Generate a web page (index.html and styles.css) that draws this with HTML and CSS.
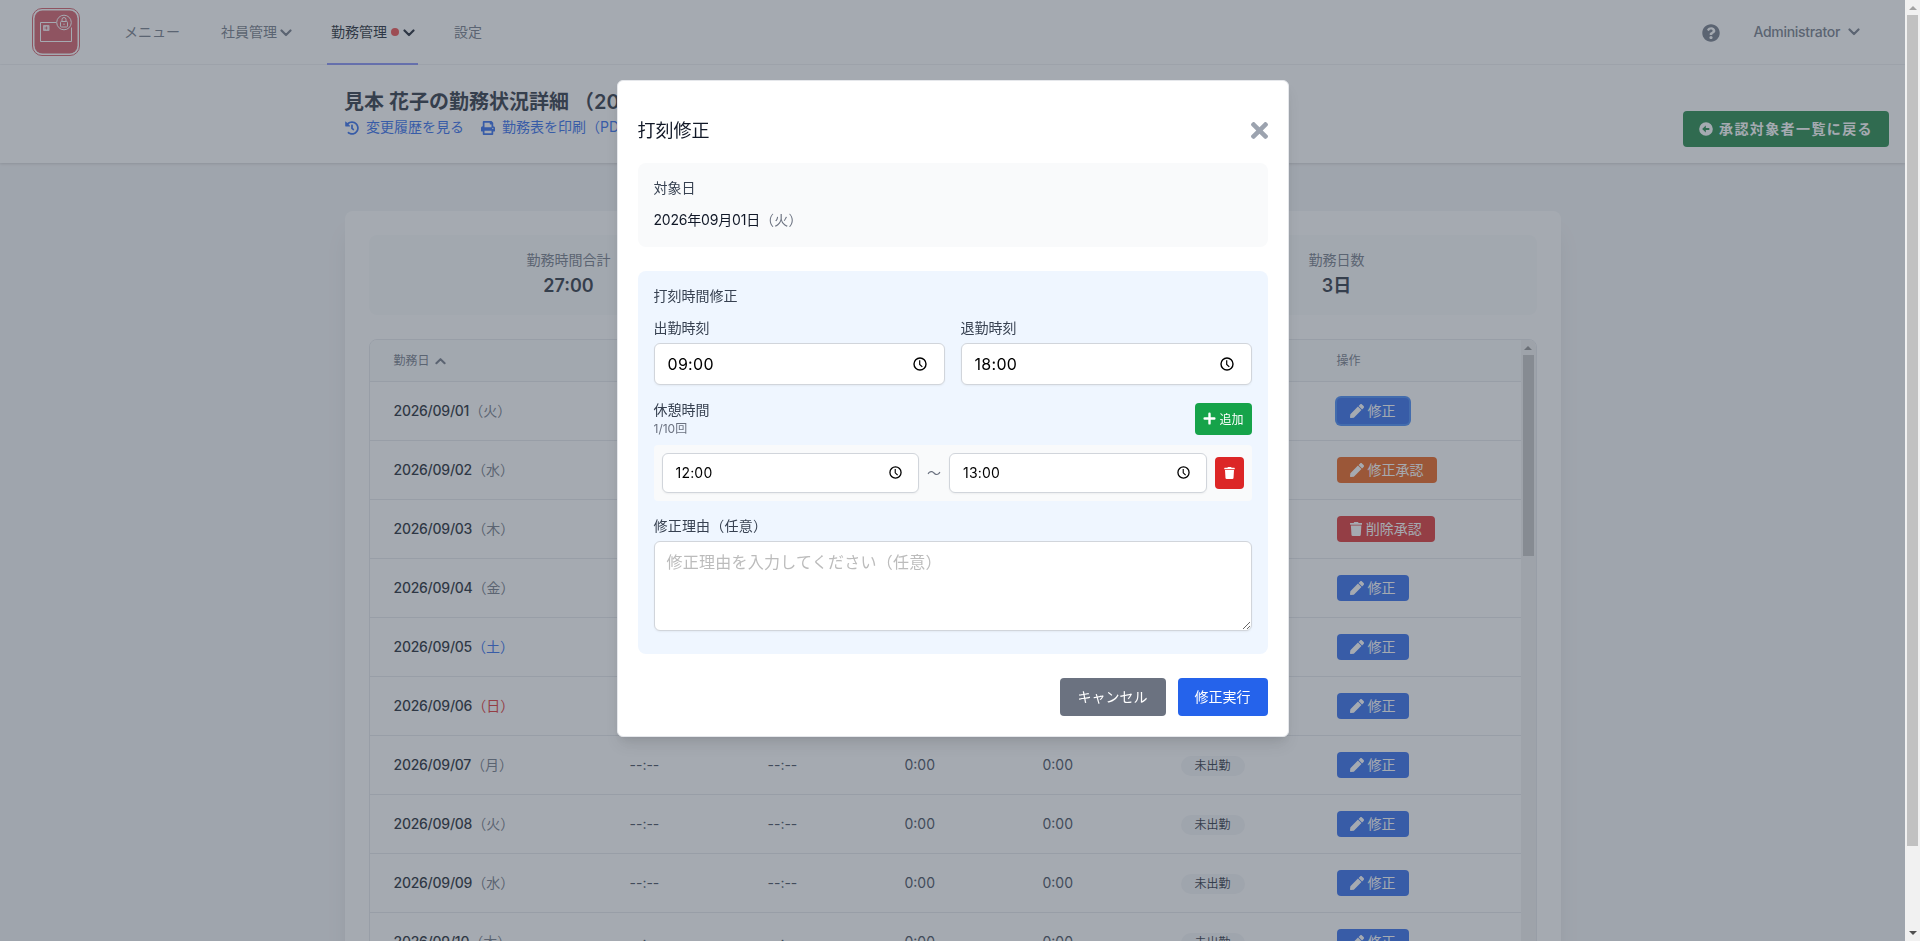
FILE: index.html
```html
<!DOCTYPE html>
<html lang="ja">
<head>
  <meta charset="UTF-8">
  <title>勤務状況詳細</title>
  <link rel="stylesheet" href="styles.css">
</head>
<body>

  <!-- Icons -->
  <svg class="sprite">
    <symbol id="chevron" viewBox="0 0 12 8"><path d="M1.5 1.5L6 6l4.5-4.5" fill="none" stroke="currentColor" stroke-width="2.2" stroke-linecap="round" stroke-linejoin="round"/></symbol>
    <symbol id="question" viewBox="0 0 512 512"><path d="M504 256c0 136.997-111.043 248-248 248S8 392.997 8 256C8 119.083 119.043 8 256 8s248 111.083 248 248zM262.655 90c-54.497 0-89.255 22.957-116.549 63.758-3.536 5.286-2.353 12.415 2.715 16.258l34.699 26.31c5.205 3.947 12.621 3.008 16.665-2.122 17.864-22.658 30.113-35.797 57.303-35.797 20.429 0 45.698 13.148 45.698 32.958 0 14.976-12.363 22.667-32.534 33.976C247.128 238.528 216 254.941 216 296v4c0 6.627 5.373 12 12 12h56c6.627 0 12-5.373 12-12v-1.333c0-28.462 83.186-29.647 83.186-106.667 0-58.002-60.165-102-116.531-102zM256 338c-25.365 0-46 20.635-46 46 0 25.364 20.635 46 46 46s46-20.636 46-46c0-25.365-20.635-46-46-46z"/></symbol>
    <symbol id="history" viewBox="0 0 512 512"><path d="M504 255.531c.253 136.64-111.18 248.372-247.82 248.468-59.015.042-113.223-20.53-155.822-54.911-11.077-8.94-11.905-25.541-1.839-35.607l11.267-11.267c8.609-8.609 22.353-9.551 31.891-1.984C173.062 425.135 212.781 440 256 440c101.705 0 184-82.311 184-184 0-101.705-82.311-184-184-184-48.814 0-93.149 18.969-126.068 49.932l50.754 50.754c10.08 10.08 2.941 27.314-11.313 27.314H24c-8.837 0-16-7.163-16-16V38.627c0-14.254 17.234-21.393 27.314-11.314l49.372 49.372C129.209 34.136 189.552 8 256 8c136.81 0 247.747 110.78 248 247.531zm-180.912 78.784l9.823-12.63c8.138-10.463 6.253-25.542-4.21-33.679L288 256.349V152c0-13.255-10.745-24-24-24h-16c-13.255 0-24 10.745-24 24v135.651l65.409 50.874c10.463 8.137 25.541 6.253 33.679-4.21z"/></symbol>
    <symbol id="print" viewBox="0 0 512 512"><path d="M448 192V77.25c0-8.49-3.37-16.62-9.37-22.63L393.37 9.37c-6-6-14.14-9.37-22.63-9.37H96C78.33 0 64 14.33 64 32v160c-35.35 0-64 28.65-64 64v112c0 8.84 7.16 16 16 16h48v96c0 17.67 14.33 32 32 32h320c17.67 0 32-14.33 32-32v-96h48c8.84 0 16-7.16 16-16V256c0-35.35-28.65-64-64-64zm-64 256H128v-96h256v96zm0-224H128V64h192v48c0 8.84 7.16 16 16 16h48v96zm48 72c-13.25 0-24-10.75-24-24 0-13.26 10.75-24 24-24s24 10.74 24 24c0 13.25-10.75 24-24 24z"/></symbol>
    <symbol id="back" viewBox="0 0 16 16"><path fill-rule="evenodd" d="M8 .2a7.8 7.8 0 1 0 0 15.6A7.8 7.8 0 0 0 8 .2zM3.600 8l4.200-4v2.800h4v2.400h-4V12z"/></symbol>
    <symbol id="pen" viewBox="0 0 512 512"><path d="M290.74 93.24l128.02 128.02-277.99 277.99-114.14 12.6C11.35 513.54-1.56 500.62.14 485.34l12.7-114.22 277.9-277.88zm207.2-19.06l-60.11-60.11c-18.75-18.75-49.16-18.75-67.91 0l-56.55 56.55 128.02 128.02 56.55-56.55c18.75-18.76 18.75-49.16 0-67.91z"/></symbol>
    <symbol id="trash" viewBox="0 0 448 512"><path d="M432 32H312l-9.4-18.7A24 24 0 0 0 281.1 0H166.8a23.72 23.72 0 0 0-21.4 13.3L136 32H16A16 16 0 0 0 0 48v32a16 16 0 0 0 16 16h416a16 16 0 0 0 16-16V48a16 16 0 0 0-16-16zM53.2 467a48 48 0 0 0 47.9 45h245.8a48 48 0 0 0 47.9-45L416 128H32z"/></symbol>
    <symbol id="plus" viewBox="0 0 12 12"><path d="M6 1.500v9M1.500 6h9" stroke="currentColor" stroke-width="2.200" stroke-linecap="round"/></symbol>
    <symbol id="times" viewBox="0 80 352 352"><path d="M242.72 256l100.07-100.07c12.28-12.28 12.28-32.19 0-44.48l-22.24-22.24c-12.28-12.28-32.19-12.28-44.48 0L176 189.28 75.93 89.21c-12.28-12.28-32.19-12.28-44.48 0L9.21 111.45c-12.28 12.28-12.28 32.19 0 44.48L109.28 256 9.21 356.07c-12.28 12.28-12.28 32.19 0 44.48l22.24 22.24c12.28 12.28 32.2 12.28 44.48 0L176 322.72l100.07 100.07c12.28 12.28 32.2 12.28 44.48 0l22.24-22.24c12.28-12.28 12.28-32.19 0-44.48L242.72 256z"/></symbol>
    <symbol id="clock" viewBox="0 0 14 14"><g fill="none" stroke="#000" stroke-width="1.400"><circle cx="7" cy="7" r="6"/><path d="M6.700 3.200V7.400l2.600 2.500" stroke-width="1.200"/></g></symbol>
  </svg>

  <div class="page">
    <nav class="navbar">
      <svg class="logo" viewBox="0 0 48 48">
        <rect x=".5" y=".5" width="47" height="47" rx="9.500" fill="#fff" stroke="#d2525f"/>
        <rect x="2.500" y="2.500" width="43" height="43" rx="8" fill="#d2525f"/>
        <g fill="none" stroke="#fff">
          <path d="M24.500 14.500h-16v19h31v-14"/>
          <circle cx="32" cy="14.500" r="7.300" fill="#d2525f"/>
          <rect x="28.500" y="13.500" width="7" height="5.500" rx="1"/>
          <path d="M30 13.500v-2a2 2 0 0 1 4 0v2M32 15.500v1.500"/>
        </g>
        <rect x="11" y="17" width="6.500" height="6" rx="1" fill="#fff" opacity=".85"/>
        <path d="M12.500 20h3M14.500 18.500v3" stroke="#d2525f" stroke-width=".8"/>
      </svg>
      <div class="nav-links">
        <a class="nav-link">メニュー</a>
        <a class="nav-link">社員管理<svg class="chevron"><use href="#chevron"/></svg></a>
        <a class="nav-link active">勤務管理<span class="dot"></span><svg class="chevron"><use href="#chevron"/></svg></a>
        <a class="nav-link">設定</a>
      </div>
      <div class="nav-user">
        <svg class="help"><use href="#question"/></svg>
        <span class="user-name">Administrator</span>
        <svg class="chevron"><use href="#chevron"/></svg>
      </div>
    </nav>

    <header class="page-header">
      <div class="header-title">
        <h1>見本 花子の勤務状況詳細 （2026年09月）</h1>
        <div class="header-links">
          <a><svg class="link-icon"><use href="#history"/></svg>変更履歴を見る</a>
          <a><svg class="link-icon"><use href="#print"/></svg>勤務表を印刷（PDF）</a>
        </div>
      </div>
      <button class="back-btn"><svg class="back-icon"><use href="#back"/></svg>承認対象者一覧に戻る</button>
    </header>

    <main class="card">
      <div class="summary">
        <div class="summary-item">
          <div class="summary-label">勤務時間合計</div>
          <div class="summary-value">27:00</div>
        </div>
        <div class="summary-item"></div>
        <div class="summary-item">
          <div class="summary-label">勤務日数</div>
          <div class="summary-value">3日</div>
        </div>
      </div>

      <div class="table-wrap">
        <div class="table">
          <div class="row head">
            <div>勤務日<svg class="sort"><use href="#chevron"/></svg></div>
            <div>出勤</div>
            <div>退勤</div>
            <div>休憩</div>
            <div>勤務</div>
            <div>状態</div>
            <div>操作</div>
          </div>
          <div id="rows"></div>
        </div>
        <div class="scrollbar table-scroll">
          <span class="arrow up"></span>
          <span class="thumb"></span>
        </div>
      </div>
    </main>

    <div class="overlay">
      <div class="modal">
        <div class="modal-head">
          <h3>打刻修正</h3>
          <svg class="close"><use href="#times"/></svg>
        </div>

        <div class="target">
          <div class="label">対象日</div>
          <div class="target-date">2026年09月01日<span>（火）</span></div>
        </div>

        <div class="form">
          <div class="label">打刻時間修正</div>
          <div class="time-grid">
            <div>
              <label class="label">出勤時刻</label>
              <div class="time-input"><span>09:00</span><svg><use href="#clock"/></svg></div>
            </div>
            <div>
              <label class="label">退勤時刻</label>
              <div class="time-input"><span>18:00</span><svg><use href="#clock"/></svg></div>
            </div>
          </div>

          <div class="break-head">
            <div>
              <div class="label">休憩時間</div>
              <div class="count">1/10回</div>
            </div>
            <button class="add-btn"><svg><use href="#plus"/></svg>追加</button>
          </div>
          <div class="break-row">
            <div class="time-input small"><span>12:00</span><svg><use href="#clock"/></svg></div>
            <span class="tilde">〜</span>
            <div class="time-input small"><span>13:00</span><svg><use href="#clock"/></svg></div>
            <button class="delete-btn"><svg><use href="#trash"/></svg></button>
          </div>

          <label class="label reason-label">修正理由（任意）</label>
          <textarea class="reason" placeholder="修正理由を入力してください（任意）"></textarea>
        </div>

        <div class="modal-foot">
          <button class="btn cancel">キャンセル</button>
          <button class="btn submit">修正実行</button>
        </div>
      </div>
    </div>
  </div>

  <div class="scrollbar page-scroll">
    <span class="arrow up"></span>
    <span class="thumb"></span>
    <span class="arrow down"></span>
  </div>

  <script>
    const days = ["火", "水", "木", "金", "土", "日", "月", "火", "水", "木"];
    const actions = {
      0: ["focused", "pen", "修正"],
      1: ["orange", "pen", "修正承認"],
      2: ["red", "trash", "削除承認"]
    };

    days.forEach((day, i) => {
      const date = "2026/09/" + String(i + 1).padStart(2, "0");
      const [cls, icon, text] = actions[i] || ["", "pen", "修正"];
      const color = day === "土" ? "sat" : day === "日" ? "sun" : "";
      const row = document.createElement("div");
      row.className = "row";
      row.innerHTML = `
        <div class="date">${date}<span class="day ${color}">（${day}）</span></div>
        <div class="none">--:--</div>
        <div class="none">--:--</div>
        <div class="hours">0:00</div>
        <div class="hours">0:00</div>
        <div><span class="pill">未出勤</span></div>
        <div><button class="row-btn ${cls}"><svg class="${icon}"><use href="#${icon}"/></svg>${text}</button></div>
      `;
      document.getElementById("rows").appendChild(row);
    });
  </script>
</body>
</html>
```

FILE: styles.css
```css
* {
  box-sizing: border-box;
}
body {
  margin: 0;
  height: 941px;
  display: flex;
  overflow: hidden;
  background: #f3f4f6;
  color: #111827;
  font-family: Inter, "Noto Sans CJK JP", sans-serif;
  font-size: 14px;
  line-height: 20px;
}
h1, h3 {
  margin: 0;
}
button {
  font-family: inherit;
  border: none;
  cursor: pointer;
}
svg {
  fill: currentColor;
  flex-shrink: 0;
}
.sprite {
  display: none;
}
.page {
  flex: 1;
  height: 941px;
  overflow: hidden;
}

/* Navigation */
.navbar {
  height: 65px;
  display: flex;
  align-items: center;
  padding: 0 60px 0 32px;
  background: white;
  border-bottom: 1px solid #f3f4f6;
}
.logo {
  width: 48px;
  height: 48px;
}
.nav-links {
  display: flex;
  gap: 32px;
  margin-left: 40px;
  height: 65px;
}
.nav-link {
  display: flex;
  align-items: center;
  padding: 1px 4px 0;
  margin-top: 1px;
  border-bottom: 2px solid transparent;
  color: #6b7280;
}
.nav-link:first-child {
  padding-right: 5px;
}
.nav-link.active {
  color: #111827;
  border-color: #818cf8;
}
.chevron {
  width: 12px;
  height: 8px;
  margin: 2px -1px 0 3px;
}
.active .chevron {
  margin-left: 4px;
}
.dot {
  width: 8px;
  height: 8px;
  margin-left: 4px;
  border-radius: 50%;
  background: #ef4444;
}
.nav-user {
  display: flex;
  align-items: center;
  margin-left: auto;
  color: #6b7280;
}
.help {
  width: 18px;
  height: 18px;
  margin: 2px 33px 0 0;
}
.user-name {
  font-weight: 500;
  letter-spacing: -0.3px;
}
.nav-user .chevron {
  margin: 0 -15px 0 8px;
}

/* Page header */
.page-header {
  position: relative;
  height: 98px;
  display: flex;
  justify-content: space-between;
  align-items: flex-start;
  padding: 25px 16px 0 344px;
  background: white;
  box-shadow: 0 1px 3px rgba(0, 0, 0, 0.1), 0 1px 2px rgba(0, 0, 0, 0.06);
}
h1 {
  font-size: 20px;
  line-height: 24px;
  font-weight: 600;
  color: #1f2937;
}
.header-links {
  display: flex;
  gap: 16px;
  margin-top: 3px;
  color: #2563eb;
}
.header-links a {
  display: flex;
  align-items: center;
}
.link-icon {
  width: 14px;
  height: 14px;
  margin: 2px 7px 0 1px;
}
.back-btn {
  display: flex;
  align-items: center;
  height: 36px;
  margin-top: 21px;
  padding: 0 16px 2px;
  border-radius: 4px;
  background: #15803d;
  color: white;
  font-size: 14px;
  font-weight: 600;
  letter-spacing: 1.4px;
}
.back-icon {
  width: 14px;
  height: 14px;
  margin: 2px 6px 0 0;
}

/* Card */
.card {
  width: 1216px;
  height: 800px;
  margin: 48px auto 0;
  padding: 24px;
  background: white;
  border-radius: 8px;
  box-shadow: 0 20px 25px -5px rgba(0, 0, 0, 0.1), 0 10px 10px -5px rgba(0, 0, 0, 0.04);
}
.summary {
  display: grid;
  grid-template-columns: repeat(3, 1fr);
  gap: 16px;
  height: 80px;
  padding: 15px 16px;
  background: #f9fafb;
  border-radius: 8px;
  text-align: center;
}
.summary-label {
  color: #6b7280;
}
.summary-value {
  margin-top: 2px;
  font-size: 18px;
  line-height: 28px;
  font-weight: 600;
  color: #1f2937;
}

/* Table */
.table-wrap {
  display: flex;
  height: 700px;
  margin-top: 24px;
  border: 1px solid #e5e7eb;
  border-radius: 8px;
  overflow: hidden;
}
.table {
  flex: 1;
}
.row {
  display: grid;
  grid-template-columns: 236px 138px 137px 138px 138px 156px 1fr;
  align-items: center;
  height: 59px;
  border-bottom: 1px solid #e5e7eb;
}
.row > div {
  padding-left: 24px;
}
.row.head {
  height: 42px;
  background: #f9fafb;
  color: #6b7280;
  font-size: 12px;
}
.sort {
  width: 11px;
  height: 8px;
  margin-left: 5px;
  transform: rotate(180deg);
}
.row .date, .row .hours, .row .none {
  padding-bottom: 1px;
}
.date {
  font-weight: 500;
  letter-spacing: -0.25px;
}
.day {
  font-weight: 400;
  letter-spacing: 0;
  color: #6b7280;
}
.day.sat {
  color: #2563eb;
}
.day.sun {
  color: #dc2626;
}
.hours, .none {
  color: #374151;
}
.pill {
  display: inline-block;
  padding: 0 14px;
  border-radius: 10px;
  background: #f3f4f6;
  color: #1f2937;
  font-size: 12px;
}
.row-btn {
  display: flex;
  align-items: center;
  height: 26px;
  padding: 0 13px 2px;
  border-radius: 4px;
  background: #2563eb;
  color: white;
  font-size: 14px;
}
.row-btn svg {
  width: 14px;
  height: 14px;
  margin: 2px 4px 0 0;
}
.row-btn .trash {
  width: 12.25px;
}
.row-btn.focused {
  box-shadow: 0 0 0 2px #3b82f6;
}
.row-btn.orange {
  background: #ea580c;
}
.row-btn.red {
  background: #dc2626;
}

/* Scrollbars */
.scrollbar {
  width: 15px;
  display: flex;
  flex-direction: column;
  align-items: center;
  background: #f1f1f1;
}
.arrow {
  border: 4px solid transparent;
}
.arrow.up {
  border-top: none;
  border-bottom-color: #a3a3a3;
  margin: 6px 0 5px;
}
.table-scroll .arrow.up {
  border-bottom-color: #8a8a8a;
}
.arrow.down {
  border-bottom: none;
  border-top-color: #505050;
  margin: auto 0 6px;
}
.thumb {
  width: 11px;
  height: 201px;
  background: #c1c1c1;
}
.page-scroll .thumb {
  height: 831px;
}

/* Modal */
.overlay {
  position: fixed;
  top: 0;
  left: 0;
  right: 15px;
  bottom: 0;
  padding-top: 80px;
  background: rgba(75, 85, 99, 0.5);
}
.modal {
  width: 672px;
  height: 657px;
  margin: 0 auto;
  padding: 20px;
  background: white;
  border: 1px solid #e5e7eb;
  border-radius: 6px;
  box-shadow: 0 10px 15px -3px rgba(0, 0, 0, 0.1), 0 4px 6px -2px rgba(0, 0, 0, 0.05);
}
.modal-head {
  display: flex;
  justify-content: space-between;
  align-items: center;
  height: 62px;
  padding-bottom: 3px;
}
.modal-head h3 {
  font-size: 18px;
  font-weight: 400;
  line-height: 28px;
}
.close {
  width: 17px;
  height: 17px;
  color: #9ca3af;
}
.label {
  display: block;
  color: #374151;
}
.reason-label {
  letter-spacing: 0.2px;
}
.target {
  height: 84px;
  padding: 15px 16px;
  background: #f9fafb;
  border-radius: 8px;
}
.target-date {
  margin-top: 12px;
  letter-spacing: -0.2px;
}
.target-date span {
  color: #6b7280;
  letter-spacing: 0.3px;
}
.form {
  height: 383px;
  margin-top: 24px;
  padding: 15px 16px;
  background: #eff6ff;
  border-radius: 8px;
}
.time-grid {
  display: grid;
  grid-template-columns: 1fr 1fr;
  gap: 16px;
  margin-top: 12px;
}
.time-input {
  display: flex;
  justify-content: space-between;
  align-items: center;
  height: 42px;
  margin-top: 5px;
  padding: 0 17px 0 13px;
  background: white;
  border: 1px solid #d1d5db;
  border-radius: 6px;
  box-shadow: 0 1px 2px rgba(0, 0, 0, 0.05);
  color: #000;
  font-size: 16px;
  letter-spacing: 0.3px;
}
.time-input svg {
  width: 14px;
  height: 14px;
}
.break-head {
  display: flex;
  justify-content: space-between;
  align-items: center;
  margin-top: 15px;
}
.count {
  margin-top: 1px;
  color: #6b7280;
  font-size: 12px;
  line-height: 16px;
}
.add-btn {
  display: flex;
  align-items: center;
  height: 32px;
  padding: 0 8px;
  border-radius: 4px;
  background: #16a34a;
  color: white;
  font-size: 12px;
}
.add-btn svg {
  width: 13px;
  height: 13px;
  margin-right: 3px;
}
.break-row {
  display: flex;
  align-items: center;
  gap: 8px;
  height: 56px;
  margin: 8px 0 15px;
  padding: 0 8px;
  background: #f9fafb;
  border-radius: 4px;
}
.time-input.small {
  flex: 1;
  height: 40px;
  margin: 0;
  padding: 0 16px 1px 13px;
  font-size: 14px;
  letter-spacing: 0.2px;
}
.time-input.small svg {
  width: 13px;
  height: 13px;
}
.tilde {
  color: #6b7280;
}
.delete-btn {
  display: flex;
  align-items: center;
  justify-content: center;
  width: 29px;
  height: 32px;
  padding: 0;
  border-radius: 4px;
  background: #dc2626;
  color: white;
}
.delete-btn svg {
  width: 11px;
  height: 12px;
}
.reason {
  display: block;
  width: 100%;
  height: 90px;
  margin-top: 5px;
  padding: 8px 12px;
  border: 1px solid #d1d5db;
  border-radius: 6px;
  box-shadow: 0 1px 2px rgba(0, 0, 0, 0.05);
  font-family: inherit;
  font-size: 16px;
  line-height: 24px;
  letter-spacing: 0.25px;
}
.reason::placeholder {
  color: #bcbcbc;
}
.modal-foot {
  display: flex;
  justify-content: flex-end;
  gap: 12px;
  margin-top: 24px;
}
.btn {
  height: 38px;
  padding: 0 16px 3px;
  border-radius: 4px;
  color: white;
  font-size: 14px;
}
.cancel {
  width: 106px;
  background: #6b7280;
}
.submit {
  width: 90px;
  background: #2563eb;
}
```
